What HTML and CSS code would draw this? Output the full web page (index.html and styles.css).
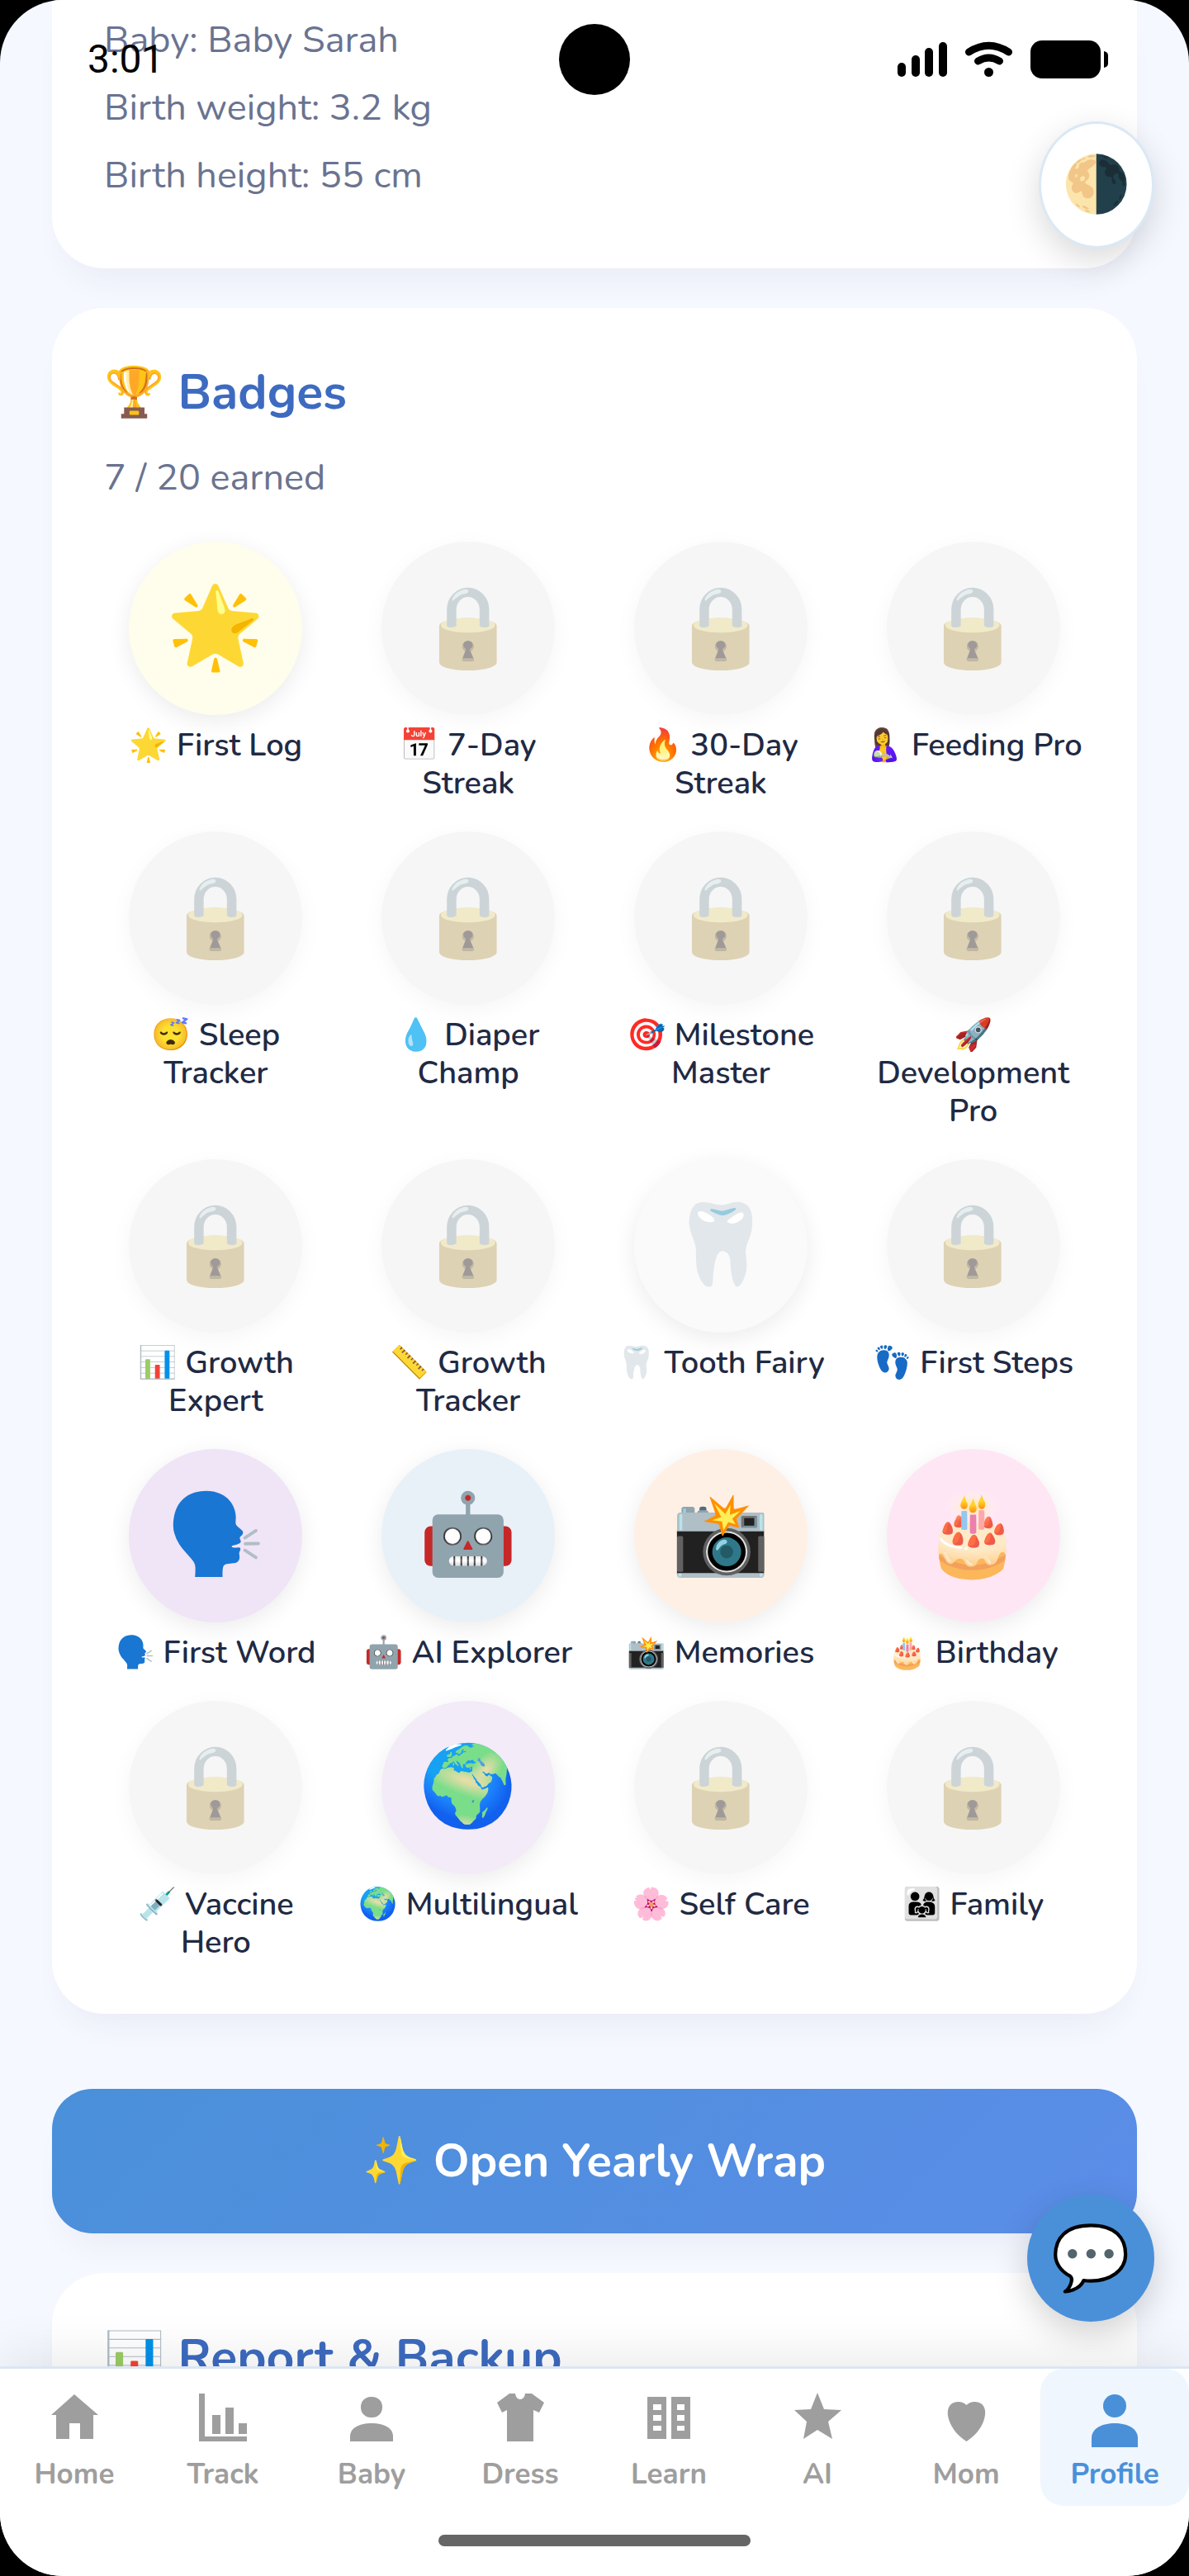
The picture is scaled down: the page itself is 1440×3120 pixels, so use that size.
FILE: index.html
```html
<!DOCTYPE html>
<html lang="en">
<head>
<meta charset="utf-8">
<meta name="viewport" content="width=device-width, initial-scale=1">
<title>Profile</title>
<link rel="stylesheet" href="styles.css">
</head>
<body>
<div class="screen">
  <div class="status">
    <span class="time">3:01</span>
    <svg class="status-icons" width="255" height="46" viewBox="0 0 255 46" aria-hidden="true">
      <rect x="0" y="27" width="10" height="17" rx="5"/><rect x="17" y="18" width="10" height="26" rx="5"/><rect x="33" y="9" width="10" height="35" rx="5"/><rect x="50" y="2" width="10" height="42" rx="5"/>
      <path d="M86.500 14Q110.500-1.500 134.500 14M97.500 25Q110.500 17 123.500 25" fill="none" stroke="#000" stroke-width="9" stroke-linecap="round"/>
      <circle cx="110.500" cy="38.500" r="5.500"/>
      <rect x="161" y="0" width="85" height="46" rx="14"/><path d="M250 13q5 1 5 5v10q0 4-5 5z"/>
    </svg>
  </div>
  <div class="camera"></div>
  <button class="theme" aria-label="Toggle theme">🌗</button>
  <button class="chat" aria-label="Open chat">💬</button>

  <main class="content">
    <section class="card card-info">
      <p>Baby: Baby Sarah</p>
      <p>Birth weight: 3.2 kg</p>
      <p>Birth height: 55 cm</p>
    </section>

    <section class="card">
      <h2>🏆 Badges</h2>
      <p class="earned">7 / 20 earned</p>
      <ul class="badges">
        <li><span class="disc gold">🌟</span>🌟 First Log</li>
        <li><span class="disc locked">🔒</span>📅 7-Day<br>Streak</li>
        <li><span class="disc locked">🔒</span>🔥 30-Day<br>Streak</li>
        <li><span class="disc locked">🔒</span>🤱 Feeding Pro</li>
        <li><span class="disc locked">🔒</span>😴 Sleep<br>Tracker</li>
        <li><span class="disc locked">🔒</span>💧 Diaper<br>Champ</li>
        <li><span class="disc locked">🔒</span>🎯 Milestone<br>Master</li>
        <li><span class="disc locked">🔒</span>🚀<br>Development<br>Pro</li>
        <li><span class="disc locked">🔒</span>📊 Growth<br>Expert</li>
        <li><span class="disc locked">🔒</span>📏 Growth<br>Tracker</li>
        <li><span class="disc pearl">🦷</span>🦷 Tooth Fairy</li>
        <li><span class="disc locked">🔒</span>👣 First Steps</li>
        <li><span class="disc violet">🗣️</span>🗣️ First Word</li>
        <li><span class="disc sky">🤖</span>🤖 AI Explorer</li>
        <li><span class="disc peach">📸</span>📸 Memories</li>
        <li><span class="disc pink">🎂</span>🎂 Birthday</li>
        <li><span class="disc locked">🔒</span>💉 Vaccine<br>Hero</li>
        <li><span class="disc lilac">🌍</span>🌍 Multilingual</li>
        <li><span class="disc locked">🔒</span>🌸 Self Care</li>
        <li><span class="disc locked">🔒</span>👨‍👩‍👧 Family</li>
      </ul>
    </section>

    <button class="wrap-button">✨ Open Yearly Wrap</button>

    <section class="card">
      <h2>📊 Report &amp; Backup</h2>
    </section>
  </main>

  <footer class="bottom">
    <nav class="tabs">
      <a href="#home"><svg viewBox="0 0 70 76"><path d="M35 9L64 34H58V63H42V44H29V63H13V34H7z"/></svg>Home</a>
      <a href="#track"><svg viewBox="0 0 70 76"><path d="M6 8h7v52h51v6H6zM22 34h10v23H22zM38 25h10v32H38zM54 44h10v13H54z"/></svg>Track</a>
      <a href="#baby"><svg viewBox="0 0 70 76"><rect x="22" y="12" width="26" height="25" rx="12"/><path d="M9 66V60C9 49 21 44 35 44s26 5 26 16v6z"/></svg>Baby</a>
      <a href="#dress"><svg viewBox="0 0 70 76"><path d="M22 8h7q1 7 6 7t6-7h8l15 11-6 12-7-3v38H19V28l-6 3L7 19z"/></svg>Dress</a>
      <a href="#learn"><svg viewBox="0 0 70 76"><path fill-rule="evenodd" d="M9 12h23v51H9zM38 12h23v51H38zM16 21v7h10v-7zM16 34v7h10v-7zM16 47v6h10v-6zM45 21v7h9v-7zM45 34v7h9v-7zM45 47v6h9v-6z"/></svg>Learn</a>
      <a href="#ai"><svg viewBox="0 0 70 76"><path d="M35 7L43 27 64 28 48 42 53 63 35 52 18 63 22 42 7 28 27 27z"/></svg>AI</a>
      <a href="#mom"><svg viewBox="0 0 70 76"><path d="M35.500 22C31 17 23 17 18 20 12 24 12 32 14 39c3 11 12 21 21.500 27C45 60 54 50 57 39c2-7 2-15-4-19-5-3-13-3-17.500 2z"/></svg>Mom</a>
      <a href="#profile" class="active" aria-current="page"><svg viewBox="0 0 70 76"><rect x="21" y="9" width="28" height="28" rx="14"/><path d="M7 73V62C7 50 20 44 35 44s28 6 28 18v11z"/></svg>Profile</a>
    </nav>
    <div class="home-bar"></div>
  </footer>
</div>
</body>
</html>
```
FILE: styles.css
```css
* {
  box-sizing: border-box;
  margin: 0;
  padding: 0;
}

body {
  background: #000;
  color: #1f2a44;
  font-family: Nunito, Lato, "Noto Color Emoji", sans-serif;
}

button {
  border: 0;
  font-family: inherit;
}

.screen {
  position: relative;
  display: flex;
  flex-direction: column;
  height: 100vh;
  overflow: hidden;
  border-radius: 76px;
  background: #f5f8ff;
}

/* System overlays */
.status {
  position: absolute;
  z-index: 3;
  top: 44px;
  left: 106px;
  right: 98px;
  display: flex;
  justify-content: space-between;
  align-items: center;
}

.time {
  color: #000;
  font: 48px/56px Roboto, sans-serif;
}

.camera {
  position: absolute;
  z-index: 3;
  top: 29px;
  left: 50%;
  width: 86px;
  height: 86px;
  margin-left: -43px;
  border-radius: 50%;
  background: #000;
}

.theme,
.chat {
  position: absolute;
  z-index: 2;
  display: flex;
  align-items: center;
  justify-content: center;
  height: 154px;
  border-radius: 50%;
}

.theme {
  top: 147px;
  right: 42px;
  width: 140px;
  border: 3px solid #dbe8f5;
  background: #fff;
  box-shadow: 0 14px 42px rgba(0, 0, 0, .15);
  font-size: 67px;
}

.chat {
  right: 42px;
  bottom: 308px;
  width: 154px;
  background: #4a90d9;
  box-shadow: 0 14px 42px rgba(0, 0, 0, .18);
  font-size: 77px;
}

/* Scrolling content */
.content {
  flex: 1;
  min-height: 0;
  display: flex;
  flex-direction: column;
  padding: 0 63px;
  overflow-y: auto;
  scrollbar-width: none;
}

.card {
  flex-shrink: 0;
  margin-bottom: 48px;
  padding: 63px;
  border-radius: 63px;
  background: #fff;
  box-shadow: 0 28px 42px -21px rgba(90, 50, 110, .08);
}

.card-info {
  padding-top: 8px;
  padding-bottom: 71px;
  border-radius: 0 0 63px 63px;
}

.card-info p,
.earned {
  color: #6a7390;
  font-size: 45px;
  line-height: 82px;
}

h2 {
  color: #3d6bc0;
  font-size: 59px;
  line-height: 80px;
  font-weight: 700;
}

.earned {
  margin: 22px 0 36px;
}

.badges {
  display: grid;
  grid-template-columns: repeat(4, 1fr);
  gap: 35px;
  list-style: none;
}

.badges li {
  font-size: 38px;
  line-height: 46px;
  font-weight: 600;
  text-align: center;
}

.disc {
  display: flex;
  align-items: center;
  justify-content: center;
  width: 210px;
  height: 210px;
  margin: 0 auto 14px;
  border-radius: 50%;
  box-shadow: 0 7px 28px rgba(0, 0, 0, .08);
  font-size: 96px;
}

.locked {
  background: #eee;
  filter: grayscale(.6);
  opacity: .5;
}

.gold { background: #fffdec; }
.pearl { background: #fafafa; }
.violet { background: #f0e4f7; }
.sky { background: #e9f1f8; }
.peach { background: #fff0e6; }
.pink { background: #ffe6f4; }
.lilac { background: #f3ebf8; }

.wrap-button {
  flex-shrink: 0;
  height: 175px;
  margin: 43px 0 48px;
  border-radius: 49px;
  background: linear-gradient(135deg, #4a90d9, #5b8de8);
  box-shadow: 0 28px 42px -21px rgba(90, 50, 110, .08);
  color: #fff;
  font-size: 56px;
  font-weight: 700;
}

/* Bottom navigation */
.bottom {
  z-index: 1;
  padding-bottom: 36px;
  border-top: 3px solid #dbe6f3;
  background: #fff;
  box-shadow: 0 -14px 56px rgba(0, 0, 0, .08);
}

.tabs {
  display: grid;
  grid-template-columns: repeat(8, 1fr);
}

.tabs a {
  display: flex;
  flex-direction: column;
  align-items: center;
  gap: 7px;
  height: 166px;
  padding-top: 22px;
  border-radius: 28px;
  color: #9e9e9e;
  font-size: 35px;
  line-height: 46px;
  font-weight: 700;
  text-decoration: none;
}

.tabs svg {
  width: 70px;
  height: 76px;
  fill: currentColor;
}

.tabs .active {
  background: #eff6fe;
  color: #4a90d9;
}

.home-bar {
  width: 378px;
  height: 14px;
  margin: 35px auto 0;
  border-radius: 7px;
  background: #666;
}
```
